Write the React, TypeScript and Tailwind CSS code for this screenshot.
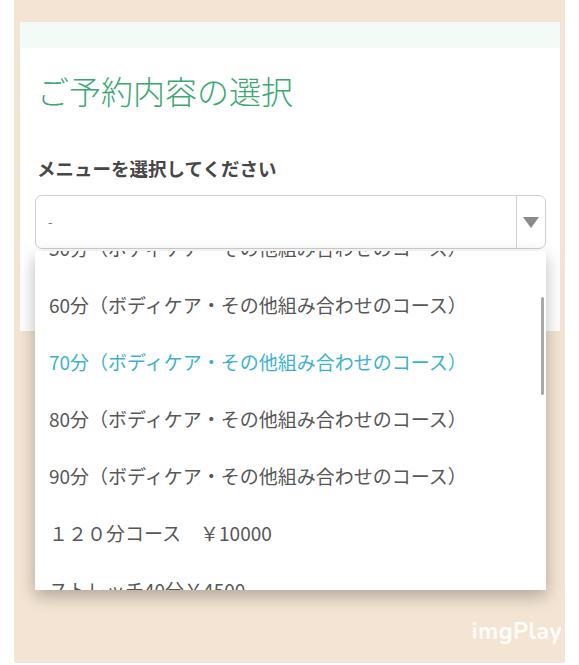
import React from 'react';

const items = [
  { label: '50分（ボディケア・その他組み合わせのコース）' },
  { label: '60分（ボディケア・その他組み合わせのコース）' },
  { label: '70分（ボディケア・その他組み合わせのコース）', active: true },
  { label: '80分（ボディケア・その他組み合わせのコース）' },
  { label: '90分（ボディケア・その他組み合わせのコース）' },
  { label: '１２０分コース　￥10000' },
  { label: 'ストレッチ40分￥4500' },
];

const font = { fontFamily: '"Noto Sans CJK JP", "Noto Sans", sans-serif' };

export default function App() {
  return (
    <div className="w-[579px] h-[665px] bg-white flex" style={font}>
      <div className="relative ml-[14px] w-[551px] h-[663px] bg-[#f3e4d3] pt-[22px] pl-[6px] pr-[5px] rounded-b-[2px]">
        <div className="bg-white h-[309px] flex flex-col">
          <div className="h-[26px] bg-[#f3fbf7]" />
          <div className="pl-[17px] pr-[14px]">
            <h2 className="mt-[18px] text-[32px] leading-[48px] font-light text-[#3ba86e] tracking-[0px]">
              ご予約内容の選択
            </h2>
            <p className="mt-[40px] text-[18.5px] leading-[28px] font-bold text-[#474747]">
              メニューを選択してください
            </p>
            <div className="relative mt-[13px] -ml-[2px]">
              <div className="h-[54px] flex items-stretch border border-[#cfcfcf] rounded-[7px] bg-white">
                <div className="flex-1 flex items-center pl-[12px] text-[13px] text-[#777]">-</div>
                <div className="w-[29px] border-l border-[#d4d4d4] flex items-center justify-center">
                  <svg width="16" height="11" viewBox="0 0 16 11">
                    <polygon points="0,0 16,0 8,11" fill="#8a8a8a" />
                  </svg>
                </div>
              </div>
              <div className="absolute left-0 right-0 top-[56px] h-[339px] bg-white overflow-hidden shadow-[0_6px_16px_rgba(0,0,0,0.28)] z-10">
                <div className="-mt-[31px]">
                  {items.map((it) => (
                    <div
                      key={it.label}
                      className={`h-[57px] flex items-center pl-[14px] text-[19px] whitespace-nowrap ${
                        it.active ? 'text-[#3cb3cc]' : 'text-[#575757]'
                      }`}
                    >
                      {it.label}
                    </div>
                  ))}
                </div>
                <div className="absolute right-[2px] top-[46px] w-[3px] h-[98px] rounded-full bg-[#a9a9a9]" />
              </div>
            </div>
          </div>
        </div>
        <div className="absolute right-[3px] bottom-[14px] text-[23px] font-bold text-white/90 tracking-[0.5px]" style={{ fontFamily: '"Nunito", "DejaVu Sans", sans-serif' }}>
          imgPlay
        </div>
      </div>
    </div>
  );
}
